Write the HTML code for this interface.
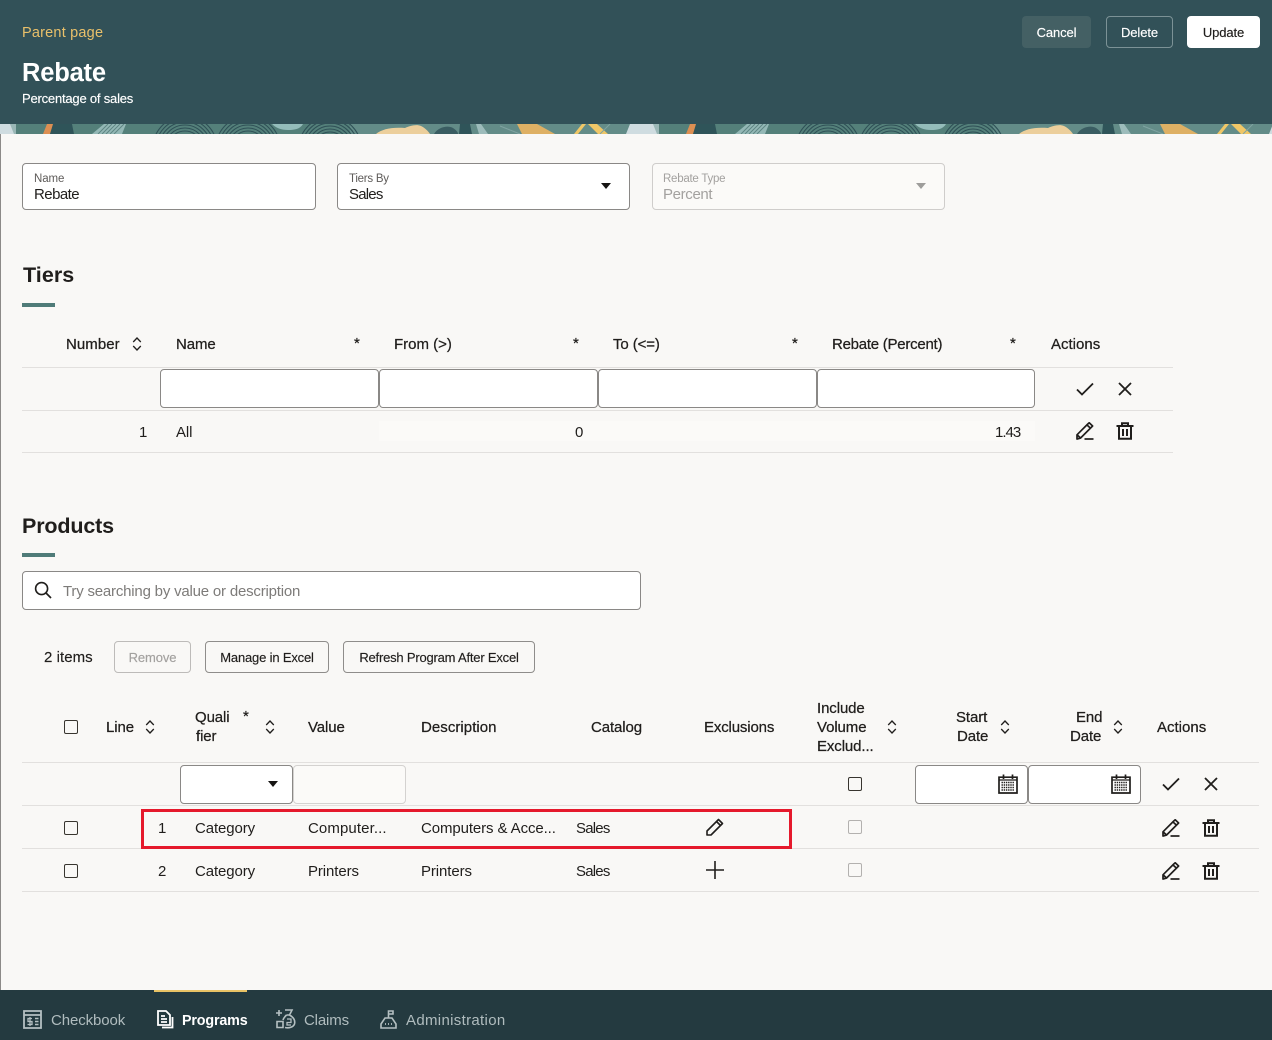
<!DOCTYPE html>
<html lang="en"><head><meta charset="utf-8"><title>Rebate</title>
<style>
html,body{margin:0;padding:0}
body{width:1272px;height:1040px;position:relative;overflow:hidden;background:#f9f8f6;font-family:"Liberation Sans",sans-serif;color:#201e1c;font-size:15px}
.t{position:absolute;white-space:nowrap;line-height:20px;height:20px;letter-spacing:-.1px;margin-top:3px}
.h{-webkit-text-stroke:.25px #201e1c}
.r{position:absolute}
.box{position:absolute;box-sizing:border-box;background:#fff;border:1px solid #8a8886;border-radius:4px}
.line{position:absolute;height:1px;background:#e2e0de}
.btn{position:absolute;box-sizing:border-box;height:32px;border:1px solid #8f8d8b;border-radius:4px;font-size:13px;line-height:31px;text-align:center;color:#201e1c;-webkit-text-stroke:.15px currentColor;letter-spacing:-.1px}
svg.i{position:absolute;overflow:visible}
</style></head><body>
<svg width="0" height="0" style="position:absolute">
<defs>
<symbol id="sort" viewBox="0 0 10 16"><path d="M1.200 6 5 2l3.800 4M1.200 10 5 14l3.800-4" fill="none" stroke="#201e1c" stroke-width="1.300"/></symbol>
<symbol id="check" viewBox="0 0 18 14"><path d="M1 7.500 6 12.500 17 1.500" fill="none" stroke="#201e1c" stroke-width="1.800"/></symbol>
<symbol id="x" viewBox="0 0 14 14"><path d="M1 1 13 13M13 1 1 13" fill="none" stroke="#201e1c" stroke-width="1.800"/></symbol>
<symbol id="edit" viewBox="0 0 18 18"><path d="M1 17V12.800L11.800 2 13.200.8 16.600 4 15 5.600 4.600 16 1 17ZM1 12.800 4.600 16M11 3 15 6.600" fill="none" stroke="#201e1c" stroke-width="1.700" stroke-linejoin="round"/><path d="M8.500 17H17.500" stroke="#201e1c" stroke-width="1.700"/></symbol>
<symbol id="trash" viewBox="0 0 18 18"><path d="M0.500 4H17.500M6 4V1.200H12V4M3 4V16.800H15V4M7 7V14M11 7V14" fill="none" stroke="#201e1c" stroke-width="2"/></symbol>
<symbol id="cal" viewBox="0 0 20 20"><path d="M1 3.200H19V19H1ZM5.500 0.500V5M14.500 0.500V5" fill="none" stroke="#201e1c" stroke-width="1.700"/><path d="M1 6H19" stroke="#201e1c" stroke-width="1.200"/><path d="M3.500 8.500H16.500M3.500 11H16.500M3.500 13.500H16.500M3.500 16H16.500" stroke="#201e1c" stroke-width="1.600" stroke-dasharray="1.400 .8"/></symbol>
<symbol id="caret" viewBox="0 0 10 6"><path d="M0 0H10L5 6Z" fill="#161513"/></symbol>
<pattern id="bp" x="0" y="0" width="643" height="10" patternUnits="userSpaceOnUse">
<rect width="643" height="10" fill="#54807a"/>
<rect x="350" width="293" height="10" fill="#638c88"/>
<rect x="0" width="16" height="10" fill="#cfdce0"/>
<path d="M16 0H10L14 10H16Z" fill="#9ab7b6"/>
<path d="M47 0H54L50 10H43Z" fill="#dd8f52"/>
<path d="M53 0H72L74 10H50Z" fill="#2f5459"/>
<path d="M92 10 104 0H126L122 10Z" fill="#94b8b6"/>
<path d="M98 10 108 0M102 10 112 0M106 10 116 0M110 10 120 0M114 10 124 0" stroke="#5d8582" stroke-width="1"/>
<g fill="none" stroke="#2e5056" stroke-width="1.100">
<circle cx="185" cy="24" r="32"/><circle cx="185" cy="24" r="29"/><circle cx="185" cy="24" r="26"/><circle cx="185" cy="24" r="23"/><circle cx="185" cy="24" r="20"/><circle cx="185" cy="24" r="17"/>
<circle cx="248" cy="24" r="32"/><circle cx="248" cy="24" r="29"/><circle cx="248" cy="24" r="26"/><circle cx="248" cy="24" r="23"/><circle cx="248" cy="24" r="20"/><circle cx="248" cy="24" r="17"/>
<circle cx="330" cy="24" r="31"/><circle cx="330" cy="24" r="28"/><circle cx="330" cy="24" r="25"/><circle cx="330" cy="24" r="22"/><circle cx="330" cy="24" r="19"/><circle cx="330" cy="24" r="16"/></g>
<path d="M272 0H303C300 5 295 6 288 6 281 6 276 4 272 0Z" fill="#94bcba"/>
<path d="M376 10C382 5 392 3 405 4 410 2 416 0 421 2 425 4 428 7 430 10Z" fill="#eccf9c"/>
<path d="M434 10C438 3 448 1 453 4 456 6 458 8 458 10Z" fill="#3a5d62"/>
<path d="M460 0H470L472 10H459Z" fill="#2f5459"/>
<path d="M476 0H481L488 10H479Z" fill="#9dbcbb"/>
<path d="M517 0H537L555 10H522Z" fill="#deb064"/>
<path d="M578 10 586 0H582L574 10ZM588 0H597L608 10H598Z" fill="#f0c767"/>
<path d="M626 10 630 0H643V10Z" fill="#cfdce0"/>
<path d="M600 10 610 0M500 2 520 10" stroke="#7fa3a1" stroke-width="1" fill="none"/>
</pattern>
</defs>
</svg>

<!-- header -->
<div class="r" style="left:0;top:0;width:1272px;height:124px;background:#325158"></div>
<svg style="position:absolute;left:0;top:124px;overflow:hidden" width="1272" height="10"><rect x="0" y="0" width="1272" height="10" fill="url(#bp)"/></svg>
<div class="t" style="left:22px;top:20px;color:#e9c06a;font-size:14.5px;letter-spacing:.2px">Parent page</div>
<div class="t" style="left:22px;top:60px;color:#fff;font-size:25.5px;font-weight:bold;letter-spacing:-.2px">Rebate</div>
<div class="t" style="left:22px;top:86px;color:#fff;font-size:13px;-webkit-text-stroke:.15px #fff;letter-spacing:-.2px">Percentage of sales</div>
<div class="btn" style="left:1022px;top:16px;width:69px;background:#446064;border:0;color:#fff;line-height:33px">Cancel</div>
<div class="btn" style="left:1106px;top:16px;width:67px;border-color:#7c9296;color:#fff">Delete</div>
<div class="btn" style="left:1187px;top:16px;width:73px;background:#fff;border:0;line-height:33px">Update</div>

<!-- form -->
<div class="box" style="left:22px;top:163px;width:294px;height:47px"></div>
<div class="t" style="left:34px;top:166px;font-size:11.5px;color:#5e5b59">Name</div>
<div class="t" style="left:34px;top:182px;letter-spacing:-.55px">Rebate</div>
<div class="box" style="left:337px;top:163px;width:293px;height:47px"></div>
<div class="t" style="left:349px;top:166px;font-size:11.5px;color:#5e5b59;letter-spacing:-.25px">Tiers By</div>
<div class="t" style="left:349px;top:182px;letter-spacing:-.8px">Sales</div>
<svg class="i" style="left:601px;top:183px" width="10" height="6"><use href="#caret"/></svg>
<div class="box" style="left:652px;top:163px;width:293px;height:47px;background:#fbfaf8;border-color:#cfcdcb"></div>
<div class="t" style="left:663px;top:166px;font-size:11.5px;color:#a3a19f;letter-spacing:-.25px">Rebate Type</div>
<div class="t" style="left:663px;top:182px;color:#a3a19f;letter-spacing:-.35px">Percent</div>
<svg class="i" style="left:916px;top:183px" width="10" height="6"><use href="#caret" style="opacity:.4"/></svg>

<!-- tiers -->
<div class="t" style="left:23px;top:262px;font-size:21.5px;font-weight:bold;letter-spacing:.05px">Tiers</div>
<div class="r" style="left:22px;top:303px;width:33px;height:4px;background:#4f7b78"></div>
<div class="t h" style="left:66px;top:332px;letter-spacing:.05px">Number</div>
<svg class="i" style="left:132px;top:336px" width="10" height="16"><use href="#sort"/></svg>
<div class="t h" style="left:176px;top:332px">Name</div>
<div class="t h" style="left:354px;top:331px">*</div>
<div class="t h" style="left:394px;top:332px;letter-spacing:0">From (&gt;)</div>
<div class="t h" style="left:573px;top:331px">*</div>
<div class="t h" style="left:613px;top:332px">To (&lt;=)</div>
<div class="t h" style="left:792px;top:331px">*</div>
<div class="t h" style="left:832px;top:332px;letter-spacing:-.25px">Rebate (Percent)</div>
<div class="t h" style="left:1010px;top:331px">*</div>
<div class="t h" style="left:1051px;top:332px;letter-spacing:0">Actions</div>
<div class="line" style="left:22px;top:367px;width:1151px"></div>
<div class="box" style="left:160px;top:369px;width:219px;height:39px"></div>
<div class="box" style="left:379px;top:369px;width:219px;height:39px"></div>
<div class="box" style="left:598px;top:369px;width:219px;height:39px"></div>
<div class="box" style="left:817px;top:369px;width:218px;height:39px"></div>
<svg class="i" style="left:1076px;top:382px" width="18" height="14"><use href="#check"/></svg>
<svg class="i" style="left:1118px;top:382px" width="14" height="14"><use href="#x"/></svg>
<div class="line" style="left:22px;top:410px;width:1151px"></div>
<div class="r" style="left:379px;top:421px;width:656px;height:20px;background:#fbfaf8"></div>
<div class="t" style="left:139px;top:420px">1</div>
<div class="t" style="left:176px;top:420px">All</div>
<div class="t" style="left:575px;top:420px">0</div>
<div class="t" style="left:995px;top:420px;letter-spacing:-1px">1.43</div>
<svg class="i" style="left:1076px;top:422px" width="18" height="18"><use href="#edit"/></svg>
<svg class="i" style="left:1116px;top:422px" width="18" height="18"><use href="#trash"/></svg>
<div class="line" style="left:22px;top:452px;width:1151px"></div>

<!-- products -->
<div class="t" style="left:22px;top:513px;font-size:21.5px;font-weight:bold;letter-spacing:-.15px">Products</div>
<div class="r" style="left:22px;top:553px;width:33px;height:4px;background:#4f7b78"></div>
<div class="box" style="left:22px;top:571px;width:619px;height:39px"></div>
<svg class="i" style="left:34px;top:581px" width="18" height="18" viewBox="0 0 18 18"><circle cx="7.600" cy="7.600" r="6" fill="none" stroke="#201e1c" stroke-width="1.600"/><path d="M12 12 17 17" stroke="#201e1c" stroke-width="1.700"/></svg>
<div class="t" style="left:63px;top:579px;color:#7d7b79;letter-spacing:-.2px">Try searching by value or description</div>
<div class="t" style="left:44px;top:645px;-webkit-text-stroke:.15px #201e1c;letter-spacing:.05px">2 items</div>
<div class="btn" style="left:114px;top:641px;width:77px;border-color:#bdbbb9;color:#a3a19f">Remove</div>
<div class="btn" style="left:205px;top:641px;width:124px;letter-spacing:-.17px">Manage in Excel</div>
<div class="btn" style="left:343px;top:641px;width:192px;letter-spacing:-.2px">Refresh Program After Excel</div>

<div class="box" style="left:64px;top:720px;width:14px;height:14px;background:none;border:1.5px solid #38352f;border-radius:2px"></div>
<div class="t h" style="left:106px;top:715px">Line</div>
<svg class="i" style="left:145px;top:719px" width="10" height="16"><use href="#sort"/></svg>
<div class="t h" style="left:195px;top:705px">Quali</div>
<div class="t h" style="left:243px;top:704px">*</div>
<div class="t h" style="left:196px;top:724px">fier</div>
<svg class="i" style="left:265px;top:719px" width="10" height="16"><use href="#sort"/></svg>
<div class="t h" style="left:308px;top:715px">Value</div>
<div class="t h" style="left:421px;top:715px;letter-spacing:.05px">Description</div>
<div class="t h" style="left:591px;top:715px">Catalog</div>
<div class="t h" style="left:704px;top:715px;letter-spacing:-.15px">Exclusions</div>
<div class="t h" style="left:817px;top:696px">Include</div>
<div class="t h" style="left:817px;top:715px">Volume</div>
<div class="t h" style="left:817px;top:734px">Exclud...</div>
<svg class="i" style="left:887px;top:719px" width="10" height="16"><use href="#sort"/></svg>
<div class="t h" style="left:956px;top:705px">Start</div>
<div class="t h" style="left:957px;top:724px">Date</div>
<svg class="i" style="left:1000px;top:719px" width="10" height="16"><use href="#sort"/></svg>
<div class="t h" style="left:1076px;top:705px">End</div>
<div class="t h" style="left:1070px;top:724px">Date</div>
<svg class="i" style="left:1113px;top:719px" width="10" height="16"><use href="#sort"/></svg>
<div class="t h" style="left:1157px;top:715px;letter-spacing:0">Actions</div>

<div class="line" style="left:22px;top:762px;width:1237px"></div>
<div class="box" style="left:180px;top:765px;width:113px;height:39px"></div>
<svg class="i" style="left:268px;top:781px" width="10" height="6"><use href="#caret"/></svg>
<div class="box" style="left:293px;top:765px;width:113px;height:39px;background:#fbfaf8;border-color:#d4d2d0"></div>
<div class="box" style="left:848px;top:777px;width:14px;height:14px;background:none;border:1.5px solid #38352f;border-radius:2px"></div>
<div class="box" style="left:915px;top:765px;width:113px;height:39px"></div>
<svg class="i" style="left:998px;top:774px" width="20" height="20"><use href="#cal"/></svg>
<div class="box" style="left:1028px;top:765px;width:113px;height:39px"></div>
<svg class="i" style="left:1111px;top:774px" width="20" height="20"><use href="#cal"/></svg>
<svg class="i" style="left:1162px;top:777px" width="18" height="14"><use href="#check"/></svg>
<svg class="i" style="left:1204px;top:777px" width="14" height="14"><use href="#x"/></svg>
<div class="line" style="left:22px;top:805px;width:1237px"></div>

<div class="box" style="left:64px;top:821px;width:14px;height:14px;background:none;border:1.5px solid #38352f;border-radius:2px"></div>
<div class="t" style="left:158px;top:816px">1</div>
<div class="t" style="left:195px;top:816px">Category</div>
<div class="t" style="left:308px;top:816px;letter-spacing:.1px">Computer...</div>
<div class="t" style="left:421px;top:816px">Computers &amp; Acce...</div>
<div class="t" style="left:576px;top:816px;letter-spacing:-.8px">Sales</div>
<svg class="i" style="left:706px;top:818px" width="18" height="18" viewBox="0 0 18 18"><path d="M1 17V13L12.500 1.500 16.500 5.500 5 17ZM10.500 3.500 14.500 7.500" fill="none" stroke="#201e1c" stroke-width="1.600" stroke-linejoin="round"/></svg>
<div class="box" style="left:848px;top:820px;width:14px;height:14px;background:none;border:1px solid #b3b1af;border-radius:2px"></div>
<svg class="i" style="left:1162px;top:819px" width="18" height="18"><use href="#edit"/></svg>
<svg class="i" style="left:1202px;top:819px" width="18" height="18"><use href="#trash"/></svg>
<div class="line" style="left:22px;top:848px;width:1237px"></div>

<div class="box" style="left:64px;top:864px;width:14px;height:14px;background:none;border:1.5px solid #38352f;border-radius:2px"></div>
<div class="t" style="left:158px;top:859px">2</div>
<div class="t" style="left:195px;top:859px">Category</div>
<div class="t" style="left:308px;top:859px">Printers</div>
<div class="t" style="left:421px;top:859px">Printers</div>
<div class="t" style="left:576px;top:859px;letter-spacing:-.8px">Sales</div>
<svg class="i" style="left:706px;top:861px" width="18" height="18" viewBox="0 0 18 18"><path d="M9 0V18M0 9H18" stroke="#201e1c" stroke-width="1.600"/></svg>
<div class="box" style="left:848px;top:863px;width:14px;height:14px;background:none;border:1px solid #b3b1af;border-radius:2px"></div>
<svg class="i" style="left:1162px;top:862px" width="18" height="18"><use href="#edit"/></svg>
<svg class="i" style="left:1202px;top:862px" width="18" height="18"><use href="#trash"/></svg>
<div class="line" style="left:22px;top:891px;width:1237px"></div>

<div class="r" style="left:141px;top:809px;width:651px;height:40px;box-sizing:border-box;border:3px solid #e5192c"></div>

<!-- footer -->
<div class="r" style="left:0;top:990px;width:1272px;height:50px;background:#243a40"></div>
<div class="r" style="left:154px;top:990px;width:93px;height:2px;background:#e8c265"></div>
<svg class="i" style="left:23px;top:1010px" width="19" height="19" viewBox="0 0 19 19" fill="none" stroke="#b5c0c2" stroke-width="1.800"><path d="M1 1H18V18H1ZM1 5H18"/><path d="M12 8.500H15.500M12 11.500H15.500M12 14.500H15.500" stroke-width="1.500"/><path d="M9 8.500H5V11.500H9V14.500H4.500M7 7V16" stroke-width="1.300"/></svg>
<div class="t" style="left:51px;top:1008px;color:#b0bcbe">Checkbook</div>
<svg class="i" style="left:157px;top:1010px" width="17" height="19" viewBox="0 0 17 19" fill="none" stroke="#fff" stroke-width="1.800"><path d="M1 1H9L13 5V15H1ZM4 6H8M4 9H10M4 12H10"/><path d="M15.500 7V17.500H5"/></svg>
<div class="t" style="left:182px;top:1008px;color:#fff;font-weight:bold;letter-spacing:-.15px;font-size:14.3px">Programs</div>
<svg class="i" style="left:276px;top:1009px" width="20" height="20" viewBox="0 0 20 20" fill="none" stroke="#b5c0c2" stroke-width="1.600"><path d="M0 4H6M3 1V7M9 1H16L13.500 6C17 8 19.500 11 18.500 15 17.500 18 13 19.500 9 18.500M10.500 6H14M10.500 6C9 7.500 7.500 9 7 11"/><path d="M1 12.500H7V18.500H1Z"/><path d="M11 10H15V13.500H11V16H15" stroke-width="1.300"/></svg>
<div class="t" style="left:304px;top:1008px;color:#b0bcbe;letter-spacing:-.15px">Claims</div>
<svg class="i" style="left:380px;top:1010px" width="17" height="19" viewBox="0 0 17 19" fill="none" stroke="#b5c0c2" stroke-width="1.600"><path d="M8.500 8V1H13V4H8.500M5 8H12L16 14V18H1V14Z"/><path d="M5 14H6M8 14H9M11 14H12" stroke-width="1.800"/></svg>
<div class="t" style="left:406px;top:1008px;color:#b0bcbe;letter-spacing:.32px">Administration</div>
<div class="r" style="left:0;top:134px;width:1px;height:856px;background:#8c8a88"></div>
</body></html>
